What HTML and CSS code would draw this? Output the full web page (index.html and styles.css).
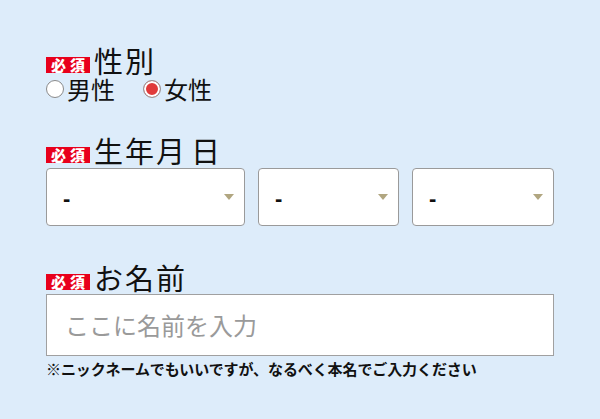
FILE: index.html
```html
<!DOCTYPE html>
<html lang="ja">
<head>
<meta charset="utf-8">
<link rel="stylesheet" href="styles.css">
</head>
<body>
<form class="form">
  <div class="field field-gender">
    <div class="label-row"><span class="badge">必須</span><span class="label">性別</span></div>
    <div class="radios">
      <label class="radio"><span class="dot"></span>男性</label>
      <label class="radio"><span class="dot checked"></span>女性</label>
    </div>
  </div>
  <div class="field field-birth">
    <div class="label-row"><span class="badge">必須</span><span class="label label-wide">生年月<span class="gap"></span>日</span></div>
    <div class="selects">
      <div class="select"><span class="val">-</span><span class="arrow"></span></div>
      <div class="select"><span class="val">-</span><span class="arrow"></span></div>
      <div class="select"><span class="val">-</span><span class="arrow"></span></div>
    </div>
  </div>
  <div class="field field-name">
    <div class="label-row"><span class="badge">必須</span><span class="label label-name">お名前</span></div>
    <div class="input"><span class="placeholder">ここに名前を入力</span></div>
    <p class="note">※ニックネームでもいいですが、なるべく本名でご入力ください</p>
  </div>
</form>
</body>
</html>
```
FILE: styles.css
```css
html, body {
  margin: 0;
  padding: 0;
  background: #ddecfa;
}
body {
  font-family: "Noto Sans CJK JP", "Noto Sans", sans-serif;
  color: #111;
}
.form {
  padding: 45px 46px 0 46px;
}
.label-row {
  display: flex;
  align-items: flex-end;
  height: 30px;
}
.badge {
  background: #e8001b;
  color: #fff;
  font-family: "Noto Sans CJK JP", serif;
  font-weight: 900;
  font-size: 15px;
  line-height: 16px;
  height: 16px;
  letter-spacing: 4px;
  padding: 0 1px 0 5px;
  margin: 0 4px 2px 0;
  white-space: nowrap;
}
.label {
  font-size: 29px;
  line-height: 30px;
  letter-spacing: 2px;
}
.gap {
  display: inline-block;
  width: 4px;
}
.radios {
  display: flex;
  align-items: center;
  height: 28px;
}
.radio {
  display: flex;
  align-items: center;
  font-size: 24px;
  line-height: 28px;
  margin-right: 28px;
}
.dot {
  width: 16px;
  height: 16px;
  border: 1px solid #8a8a8a;
  border-radius: 50%;
  background: #fff;
  margin: 0 3px 0 0;
  box-sizing: content-box;
}
.dot.checked {
  background: #e03a3a;
  box-shadow: inset 0 0 0 2px #fff;
  border-color: #999;
}
.field-birth {
  margin-top: 32px;
}
.selects {
  display: grid;
  grid-template-columns: 199px 141px 142px;
  column-gap: 13px;
  margin-top: 3px;
}
.select {
  height: 58px;
  box-sizing: border-box;
  border: 1px solid #9a9a9a;
  border-radius: 4px;
  background: #fff;
  display: flex;
  align-items: center;
  justify-content: space-between;
  padding: 0 10px 0 16px;
}
.val {
  font-family: "Liberation Sans", sans-serif;
  font-weight: 700;
  font-size: 22px;
  line-height: 20px;
  margin-top: 3px;
}
.arrow {
  width: 0;
  height: 0;
  border-left: 5px solid transparent;
  border-right: 5px solid transparent;
  border-top: 6px solid #b1a680;
  margin-top: -1px;
}
.field-name {
  margin-top: 36px;
}
.input {
  height: 62px;
  margin-top: 2px;
  box-sizing: border-box;
  border: 1px solid #a0a0a0;
  background: #fff;
  display: flex;
  align-items: center;
  padding-left: 18px;
}
.placeholder {
  font-size: 24px;
  color: #9a9a9a;
  line-height: 30px;
}
.note {
  margin: 3px 0 0;
  font-size: 15px;
  font-weight: 700;
  line-height: 20px;
  letter-spacing: -0.1px;
}
```
